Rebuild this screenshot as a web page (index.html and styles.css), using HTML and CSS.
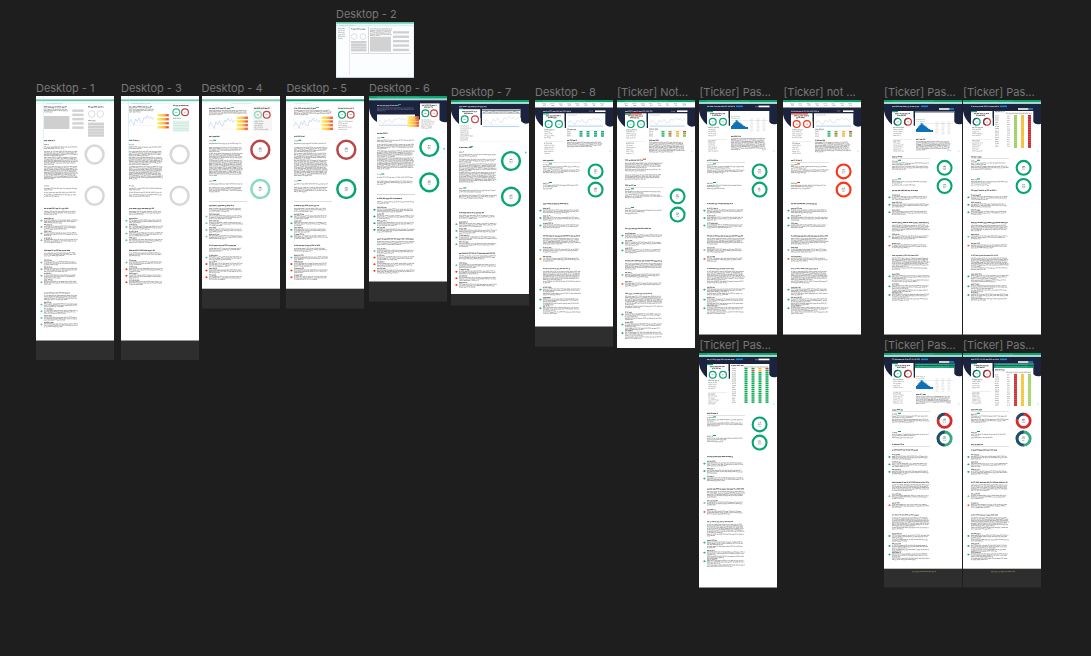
FILE: index.html
```html
<!DOCTYPE html>
<html lang="en">
<head>
<meta charset="utf-8">
<title>Canvas</title>
<link rel="stylesheet" href="styles.css">
</head>
<body>
<main class="canvas" id="canvas"></main>
<script src="canvas.js"></script>
</body>
</html>
```
FILE: styles.css
```css
body {
  margin: 0;
  background: #1e1e1e;
  font-family: Inter, "Liberation Sans", sans-serif;
}

.canvas {
  position: relative;
  width: 1091px;
  height: 656px;
  overflow: hidden;
}

/* Frames are placed freely on the canvas */
.frame {
  position: absolute;
  width: 78px;
}

.frame-label {
  position: absolute;
  left: 0;
  bottom: 100%;
  margin-bottom: 1px;
  font-size: 11px;
  line-height: 14px;
  letter-spacing: -0.03px;
  color: #777;
  white-space: nowrap;
}

.frame-art {
  display: block;
}
```
FILE: canvas.js
```js
const GREEN = '#08a573', MINT = '#86dabb', RED = '#b94747', ALERT = '#fa3419';
const NAVY = '#1b233f', GRAY = '#d8d8d8', BLUE = '#1488d8';
let seed = 7, out = '';
const rnd = () => (seed = (seed * 16807) % 2147483647) / 2147483647;
const add = s => { out += s; };

// Primitives, in frame units
function rect(x, y, w, h, fill) {
  add(`<rect x="${x}" y="${y}" width="${w}" height="${h}" fill="${fill}"/>`);
}
function path(d, stroke, sw, fill = 'none') {
  add(`<path d="${d}" stroke="${stroke}" stroke-width="${sw}" fill="${fill}"/>`);
}
function words(x, y, w, color, sw = 0.6) {
  let d = '', c = x;
  while (c < x + w - 0.5) {
    const n = Math.min(0.8 + rnd() * 3, x + w - c);
    d += `M${c.toFixed(1)} ${(y + (rnd() - 0.5) * 0.5).toFixed(2)}h${n.toFixed(1)}`;
    c += n + 0.25 + rnd() * 0.3;
  }
  path(d, color, sw);
}
function para(x, y, w, y2 = y, color = '#7c7c7c') {
  for (let r = y; r <= y2 + 0.1; r += 1.35) {
    const last = r + 1.35 > y2 + 0.1 && y2 > y;
    words(x, r, last ? w * (0.2 + rnd() * 0.5) : w * (0.93 + rnd() * 0.07), color);
  }
}
function head(x, y, w, color = '#4a4a4a') { words(x, y, w, color, 0.8); }
function ring(x, y, r, sw, color, part, frac = 0.25) {
  const m = r - sw / 2, len = 2 * Math.PI * m;
  add(`<circle cx="${x}" cy="${y}" r="${m}" fill="none" stroke="${color}" stroke-width="${sw}"/>`);
  if (part) add(`<circle cx="${x}" cy="${y}" r="${m}" fill="none" stroke="${part}" stroke-width="${sw}" stroke-dasharray="${len * frac} ${len}" transform="rotate(${-90 - 360 * frac} ${x} ${y})"/>`);
}
function score(x, y, r, sw, color, part, frac) {
  ring(x, y, r, sw, color, part, frac);
  words(x - 1.3, y - 1.4, 2.6, '#666', 0.8);
  words(x - 1.9, y + 0.2, 3.8, '#888');
  words(x - 1.5, y + 1.7, 3, '#999');
}
function small(x, y, color, part) {
  ring(x, y, 4, 1.2, color, part, 0.45);
  words(x - 1.2, y, 2.4, '#999', 0.7);
}
function items(x, ys, w, colors) {
  ys.forEach((y, i) => {
    const c = colors[i] || colors[colors.length - 1];
    rect(x - 3.2, y + 1.4, 1.3, 1.7, c);
    rect(x - 3.7, y + 1.9, 2.3, 0.7, c);
    words(x, y, 7 + rnd() * 4, '#555', 0.7);
    para(x, y + 1.6, w, y + 4.4);
  });
}
function spark(x, y, w, h, color = '#8fb0e8') {
  const v = [.8, .45, .7, .95, .4, .65, .3, .7, .75, .25, .4, .1, .35, .2, .45, .25];
  path('M' + v.map((k, i) => `${(x + w * i / 15).toFixed(1)} ${(y + h * k).toFixed(1)}`).join('L'), color, 0.4);
  path(`M${x} ${y}v${h}h${w}`, '#d9dfeb', 0.3);
}
function heatBars(x, y, step) {
  for (let i = 0; i < 4; i++) {
    rect(x, y + i * step, 11.5, 2.5, 'url(#heat)');
    words(x + 9, y + i * step + 1.2, 2, '#b84930');
  }
}
function list(x, y, y2, w = 10) {
  for (let r = y, i = 0; r <= y2; r += 2, i++) {
    words(x + 1, r, w * (0.55 + rnd() * 0.45), '#9a9a9a');
    rect(x, r - 0.4, 0.8, 0.8, i % 4 === 3 ? '#f08d7d' : '#8bd4b8');
  }
}

// Early grey and coloured wireframes
function wire(colored) {
  rect(0, 3.4, 78, 1.8, '#68cfae');
  rect(7.4, 0, 0.35, colored ? 65 : 55, '#aadcf2');
  rect(0, 7.3, 70, 0.3, '#bfe5f5');
  words(10, 7.6, colored ? 20 : 16, '#94cde8');
  head(8, 11, 22); rect(29, 10, 2, 0.8, '#49be94');
  para(8, 13.2, 25, 16.5);
  if (colored) {
    spark(8, 18.5, 25, 11); heatBars(36.3, 18, 4);
    head(52, 9.5, 16); small(55.3, 16.2, '#43bb91'); small(64, 16.2, RED);
    words(52, 22.5, 8, '#777');
    rect(52, 24.6, 16, 11, '#dff3eb');
    for (let i = 0; i < 4; i++) rect(52, 26.8 + i * 2.6, 16, 0.4, '#b8dfcf');
  } else {
    rect(8, 20, 25.4, 13, '#cfcfcf');
    for (let i = 0; i < 5; i++) rect(36.3, 13.4 + i * 4.25, 11.3, 2.5, '#d3d3d3');
    head(52, 11, 16); ring(55.6, 18, 3.8, 0.9, GRAY); ring(64.2, 18, 3.8, 0.9, GRAY);
    words(52, 24.6, 8, '#666');
    for (let i = 0; i < 5; i++) rect(52, 26.6 + i * 2.9, 16, 2.5, '#d0d0d0');
  }
  head(8, 44.5, 11);
  words(8, 48.5, 5, '#777'); para(8, 51, 34, 52.4); para(8, 55.5, 34, 59.6);
  para(8, 61.5, 34, 69); para(8, 70.7, 34, 84);
  ring(58.6, 58.5, 10.2, 2.5, GRAY); ring(58.6, 99.7, 10.2, 2.5, GRAY);
  words(8, 89.8, 5, '#777'); para(8, 92.4, 34, 93.8); para(8, 96.5, 34); para(8, 98.8, 34, 100.2);
  head(8, 112.5, 25); para(8, 115.5, 33, 118.2);
  items(8, [122.5, 128.7, 135.3, 142], 34, ['#63c6a2']);
  head(8, 154.4, 26); para(8, 157, 33, 159.8);
  items(8, [164.3, 171, 177.5, 184], 34, colored ? ['#63c6a2', ALERT] : ['#63c6a2']);
  if (!colored) {
    head(8, 197, 26, '#777'); para(8, 199.5, 34, 203.6);
    items(8, [206.3, 213, 219.7, 226.3], 34, ['#63c6a2']);
  }
}

// Second iteration with scores
function scored(dark) {
  const x = dark ? 8 : 7;
  rect(0, 3.3, 78, 2, dark ? GREEN : '#78d1b1');
  if (dark) rect(0, 5.3, 78, 0.8, '#c8ecdf');
  words(dark ? 8 : 29, 7.5, dark ? 17 : 21, '#9fd6ed', 0.5);
  if (!dark) rect(50.7, 10, 19.3, 25, '#f5f5f5');
  head(x, 12.3, 22); rect(x + 22, 11, 3, 0.9, '#35b78b');
  para(x, 14.5, 38, 18.6);
  spark(x, 21, 26, 12); heatBars(x + 27.4, 20.5, 3.7);
  head(52, 12.3, 16); small(56, 18.7, dark ? GREEN : MINT); small(64.7, 18.7, RED);
  list(52, 25.3, 34, 14);
  head(x, 40.4, 11); words(x, 44.8, 4, '#777'); rect(x + 4.2, 43.8, 3, 1, GREEN);
  para(x, 47.5, 34); para(x, 51.5, 34, 55.6); para(x, 57.5, 34, 63); para(x, 64.5, 34, 79.5);
  score(60.3 - (dark ? 0 : 2), 53.7, 10.2, 2.5, RED);
  words(x, 85, 4, '#777'); rect(x + 4.2, 84, 3, 1, GREEN);
  para(x, 88, 34); para(x, 91.6, 34, 95.6);
  score(60.3 - (dark ? 0 : 2), 93, 10.2, 2.5, dark ? GREEN : '#8adabd');
  rect(x, 105.2, 38, 0.4, '#aaa');
  head(x, 109.6, 25); para(x, 112.5, 33, 115.2);
  items(x, [118.3, 125, 131.6, 138.3], 34, [dark ? '#30b58a' : '#71cda9']);
  head(x, 149.4, 27); para(x, 152.4, 33, 155);
  items(x, [159.3, 165.8, 172.3, 179], 34, ['#63c6a2', ALERT]);
}

function hero(top, y) {
  rect(0, 0, 78, 2.1, GREEN);
  words(8, 1.1, 42, '#74c7aa', 0.4);
  if (top < 6) rect(0, 2.1, 78, top - 2.1, '#a7d6cb');
  else for (let i = 0; i < 8; i++) { words(7 + i * 8.3, 3.7, 4, '#aaa'); words(8 + i * 8.3, 5.3, 3, '#888'); }
  path(`M0 ${top}H78V${y}Q73 ${y + 2} 70 ${y - 2}V${top + 14}H31V${y + 2}H29.5V${top + 14}H8V${y + 1}Q1 ${y - 5} 0 ${top + 7}Z`, 'none', 0, NAVY);
}

function six() {
  rect(0, 0, 78, 2.8, GREEN); rect(0, 2.5, 78, 1.8, '#a7d6cb');
  words(8, 1.2, 42, '#74c7aa', 0.4);
  path('M0 4.3H78V26Q74 27 70 24H54L45.5 23H8V26Q1 22 0 12Z', 'none', 0, NAVY);
  words(8, 9.5, 22, '#c4c8d5', 0.8); rect(29, 8, 3, 1, GREEN);
  para(8, 12, 38, 15.5, '#737b92');
  rect(8, 18.5, 38, 12, '#fff'); spark(9, 21, 28, 7, '#b9c3d3'); heatBars(38.5, 20.3, 2.7);
  path('M10 29.3h29', '#92b5e0', 0.5);
  rect(51, 7.4, 19.5, 25, '#fff');
  head(53, 9.3, 15); head(55, 11, 9);
  small(56.4, 17.3, GREEN); small(65, 17.3, RED); list(52, 24, 32, 13);
  head(8, 37.3, 11); words(8, 42, 4, '#777'); rect(12.3, 41, 3, 1, GREEN);
  para(8, 44.3, 38, 45.8); para(8, 48.4, 38, 53); para(8, 55, 38, 60.5); para(8, 62, 38, 74);
  score(60.3, 51, 10.1, 2.4, GREEN); score(60.3, 86.4, 10.1, 2.4, GREEN);
  rect(74.3, 52, 1.6, 1.6, '#72b8e6');
  words(8, 78.5, 4, '#777'); rect(12.3, 77.5, 3, 1, GREEN);
  para(8, 81.3, 38); para(8, 85.3, 38, 88.2);
  rect(8, 98.2, 38, 0.4, '#999');
  head(8, 102.5, 25); para(8, 105.8, 38, 107.3);
  items(8, [111.5, 118.2, 125, 131.6], 38, [GREEN]);
  head(8, 143, 37); para(8, 145.7, 38, 148.5);
  items(8, [152.8, 159.3, 166, 172.6], 38, ['#63c6a2', ALERT]);
}

function seven() {
  hero(4, 23);
  words(8, 6.7, 28, '#c4c8d5', 0.8); rect(8, 8.2, 4, 1, GREEN);
  rect(8, 9.2, 21.3, 32, '#fff'); rect(31, 9, 38.5, 19, '#fff');
  rect(31, 9.6, 38.5, 1.1, '#444b60'); words(32, 12, 36, '#555'); path('M31 13.3h38.5', '#555', 0.4);
  spark(33, 15.5, 34, 9, '#b3c9dd'); path('M32 26.5h36', '#7eb7df', 0.6);
  head(11, 11.5, 15); head(13, 13.3, 9);
  small(13.7, 19.3, GREEN); small(24, 19.3, RED); list(9, 26, 40, 13);
  rect(8, 41.6, 62, 0.3, '#e6e6e6');
  head(8, 47.4, 13); rect(19, 46.2, 3, 1, GREEN);
  words(8, 52, 5, '#666'); para(8, 54.7, 38, 56.3); para(8, 59.5, 38, 62.2); para(8, 64, 38, 71); para(8, 72.5, 38, 83);
  score(60, 61, 10.1, 2.4, GREEN); score(60, 96.7, 10.1, 2.4, GREEN);
  rect(74, 51.7, 1.6, 1.6, '#72b8e6');
  words(8, 88.4, 4, '#777'); rect(12.3, 87.4, 3, 1, GREEN);
  para(8, 90.5, 38, 92); para(8, 95.4, 38, 98.5);
  head(8, 112.7, 25); para(8, 115.6, 38, 118.2);
  items(8, [122, 128.7, 135.3, 142], 38, ['#45b995']);
  head(8, 153.3, 37); para(8, 156, 38, 159);
  items(8, [163, 169.5, 176, 182.7], 38, ['#63c6a2', ALERT]);
}

function sections(dy) {
  head(8, 103.7 + dy, 26);
  items(8, [108.4, 115.8, 123.3].map(v => v + dy), 37, ['#26af83']);
  head(8, 136 + dy, 37); para(8, 138.6 + dy, 38, 144.6 + dy);
  items(8, [147.7 + dy], 37, ['#6fcaa9']); items(8, [156.7 + dy], 37, ['#ff5e43']);
  head(8, 168.7 + dy, 27, '#666'); para(8, 171.5 + dy, 38, 179.5 + dy); para(8, 181.3 + dy, 38, 183 + dy);
  [187.4, 197.4, 206].forEach(y => {
    items(8, [y + dy], 38, ['#26af83']); para(8, y + 6 + dy, 38, y + 7.6 + dy);
  });
}
function scores(y1, y2, c, split) {
  const n = '#1f4e6b';
  head(8, y1 - 11, 11); rect(8, y1 - 9.2, 38, 0.35, '#aaa');
  [y1, y2].forEach((y, i) => {
    const t = y - (i ? 6.2 : 6.6);
    words(8, t, 6, '#666'); rect(14, t - 1.4, 3, 1, split ? GREEN : c);
    para(8, t + 1.9, 37, t + 3.4); para(8, t + 5.2, 38, t + (i ? 6 : 9));
    score(60.6, y, 8, split ? 2.8 : 2.1, split ? (i ? '#3aa981' : '#d52b2b') : c, split && n, i ? 0.5 : 0.2);
  });
}
function grid(x, y, rows, step, cols, pick) {
  for (let r = 0; r < rows; r++) {
    words(x, y + r * step + 0.8, 4, '#888', 0.6);
    cols.forEach((cx, c) => rect(cx, y + r * step, 3, step * 0.72, pick(r, c)));
  }
}
const picks = (r, c) => ['#08a850', r === 1 ? '#e83b30' : '#08a850', r < 2 ? '#f3b51b' : '#08a850', r === 0 ? '#df3931' : '#08a850'][c];

// Ticker pages: o.kind selects what fills the main panel
function ticker(o) {
  const live = o.kind === 'live', top = live ? 7.5 : 4;
  const t = live ? 0 : o.split ? -3.3 : -2.3;
  hero(top, 26 + t);
  words(8, 11.3 + (live ? 0 : o.split ? -5 : -4.8), 28, '#c4c8d5', 0.8);
  if (live) { rect(60, 10.4, 10.5, 1.6, '#fff'); words(54, 11.2, 4, '#aaa'); }
  else {
    rect(37, 5.6, 7, 1.5, BLUE);
    if (o.blueBtn) { rect(55, 8.2, 10.5, 1.6, '#fff'); rect(66, 8.2, 4, 1.6, BLUE); }
    else { rect(59.5, 5.6, 11, 1.7, '#fff'); words(56, 6.5, 3, '#aaa'); }
  }
  const cy = 13.3 + t;
  rect(8, cy, 21.5, 42, '#fff'); rect(31, cy, 39.3, 38, '#fff');
  rect(8, cy, o.tag ? 17 : 6, 1.2, o.tag || GREEN);
  if (o.tag === ALERT && !o.c) rect(8, cy, 6, 1.2, GREEN);
  head(11, cy + 2.6, 15); head(13, cy + 4.4, 9);
  const c = o.c || GREEN;
  small(13.7, cy + 10.8, c, o.multi && '#29546c'); small(24, cy + 10.8, o.multi ? '#cf3a3a' : c, o.multi && '#7b3348');
  words(9, cy + 16.5, 11, '#777'); list(9, cy + 18.5, cy + 26, 10);
  rect(9, cy + 28, 19, 0.25, '#bbb'); words(9, cy + 30, 8, '#777'); list(9, cy + 32, cy + 41, 10);
  if (live) {
    words(33, 15, 10, '#bbb'); spark(33, 17, 35, 8, '#a8c6da'); path('M33 26.2h35', '#69a5d5', 0.5);
    words(32, 29.3, 9, '#555'); rect(31, 30.4, 38, 0.25, '#ccc');
    grid(32, 31, 3, 2.1, [44.5, 51.5, 59, 66], o.mixed ? (r, c) => ['#20b86b', r === 1 ? '#ed4c3d' : '#67bd4b', '#f4b92d', r ? '#76bd51' : '#e64a3b'][c] : () => '#13a96e');
    head(32, 40.3, 10); para(32, 42.4, 36, o.mixed ? 53 : 47.5);
  } else if (o.kind === 'peak') {
    const b = o.split ? 36 : o.blueBtn ? 32 : 29;
    if (o.blueBtn) rect(31, cy, 39.3, 1.6, '#70778a');
    words(32, b - 12.5, 9, '#aaa'); words(32, b - 10.5, 9, '#8ccbb4');
    rect(32, b - 8.5, 37, 0.25, '#bbb');
    path(`M32 ${b}v-3h1v-1.3h1.2v-1.4h1.2v-1.4h1.2v-1.7h2v1.2h1.2v1h1.5v1.2h1.5v1.1h1.5v1.2h1.8v1h3V${b}z`, 'none', 0, '#0f72b9');
    for (let i = 0; i < 9; i++) for (let k = 0; k < 3; k++) words(51.5 + k * 6, b - 10 + i * 1.5, 3, '#ccc', 0.5);
    head(32, b + 7.4 - (o.split ? 2 : 0), 10);
    para(32, b + 9.6 - (o.split ? 2 : 0), 35, 50.5); words(63, 50, 4, '#7cabea');
  } else if (o.kind === 'table') {
    head(32, cy + 1.5, 13); words(45, cy + 3, 24, '#888');
    grid(33, 14.8, 17, 2.1, [45.5, 52.5, 59.5, 66.5], picks);
  } else {
    const top2 = o.split ? 21 : 15, cols = o.split ? ['#cf3030', '#f5c638', '#a5d367'] : ['#9ccf5f', '#f5bd36', '#c8282e'];
    head(32, top2 - 4, 10); words(43, top2 - 1.5, 26, '#888');
    [51, 58, 65].forEach((x, i) => rect(x, top2, 3, o.split ? 32 : 33, cols[i]));
    grid(32, top2, 15, 2.15, [], picks);
    for (let i = 0; i < 15; i++) {
      words(44, top2 + 1 + i * 2.15, 3, '#999');
      [51, 58, 65].forEach(x => rect(x, top2 + 1.8 + i * 2.15, 3, 0.3, '#ffffff99'));
    }
    rect(31, top2 - 2.6, 38, 0.25, '#ccc');
  }
  if (o.split) { rect(31, 10.3, 39.3, 4.3, NAVY); rect(31, 10.8, 39.3, 1.7, GREEN); rect(31, 13, 39.3, 1.7, GREEN); words(33, 11.6, 32, '#7ed0b3', 0.4); words(33, 13.8, 32, '#7ed0b3', 0.4); }
  rect(74, 50.3, 1.5, 1.5, '#cfe6f6');
  if (o.extra) {
    head(8, 60.2, 18); rect(26, 58.7, 3, 1, ALERT); rect(8, 62, 38, 0.3, '#bbb');
    para(8, 63.5, 37, 67.5); para(8, 69.5, 37, 72); para(8, 75, 37, 79);
    scores(96.3, 114.6, GREEN);
  } else if (o.split) scores(67.8, 85.6, GREEN, true);
  else scores(71.4 + (o.blueBtn ? -3.6 : 0), 89.6 + (o.blueBtn ? -3.6 : 0), c);
  if (o.split) { head(8, 91.5, 12); rect(8, 93.3, 38, 0.35, '#aaa'); }
  sections(o.extra ? 24.9 : o.split ? -6.7 : o.blueBtn ? -13.3 : 0);
}

function overview() {
  rect(0, 0, 78, 55.5, '#fbfdff'); rect(0, 0, 78, 1.7, '#62c9a5');
  rect(0, 2.6, 78, 1.7, '#d9f0fa'); words(3, 3.4, 15, '#9ccce5');
  for (let i = 0; i < 6; i++) words(2, 6.6 + i * 2, 5 + rnd() * 3, '#999');
  rect(13.2, 5, 0.4, 48, '#c4c4c4'); rect(32.2, 5, 0.5, 26, '#aaa'); rect(15, 31, 60, 0.5, '#bbb');
  head(15, 7, 15, '#777'); ring(18.2, 14.5, 3.2, 0.6, '#ccc'); ring(27, 14.5, 3.2, 0.6, '#ccc');
  for (let i = 0; i < 4; i++) rect(15, 19 + i * 2.7, 15.5, 2.3, '#d0d0d0');
  para(34, 7, 22, 14, '#999'); rect(34, 14.8, 21, 14.8, '#d2d2d2');
  for (let i = 0; i < 5; i++) rect(57, 9.2 + i * 4.4, 16, 2.3, '#d0d0d0');
  path('M.2 0V55.3H77.8V0', '#bddcf0', 0.5);
}

// [label, x, y, page height, total height, painter]
const frames = [
  ['Desktop - 1', 36, 96, 244.5, 264, () => wire(false)],
  ['Desktop - 2', 336, 22, 55.5, 55.5, overview],
  ['Desktop - 3', 121, 96, 244.5, 264, () => wire(true)],
  ['Desktop - 4', 201.5, 96, 192.7, 212.5, () => scored(false)],
  ['Desktop - 5', 286.4, 96, 192.7, 212.5, () => scored(true)],
  ['Desktop - 6', 369, 96, 185.5, 205.7, six],
  ['Desktop - 7', 451, 100, 194, 205.5, seven],
  ['Desktop - 8', 535, 100, 226.5, 246.7, () => ticker({ kind: 'live' })],
  ['[Ticker] Not...', 617, 100, 248, 248, () => ticker({ kind: 'live', mixed: true, tag: ALERT, extra: true })],
  ['[Ticker] Pas...', 699.4, 100, 234.5, 234.5, () => ticker({ kind: 'peak' })],
  ['[Ticker] not ...', 783.4, 100, 234.5, 234.5, () => ticker({ kind: 'live', mixed: true, tag: ALERT, c: ALERT })],
  ['[Ticker] Pas...', 884, 100, 234.5, 234.5, () => ticker({ kind: 'peak', blueBtn: true, multi: true })],
  ['[Ticker] Pas...', 963, 100, 234.5, 234.5, () => ticker({ kind: 'columns', blueBtn: true, multi: true })],
  ['[Ticker] Pas...', 699.4, 353, 234.5, 234.5, () => ticker({ kind: 'table' })],
  ['[Ticker] Pas...', 884, 353, 215.7, 234.5, () => ticker({ kind: 'peak', blueBtn: true, multi: true, split: true })],
  ['[Ticker] Pas...', 963, 353, 215.7, 234.5, () => ticker({ kind: 'columns', blueBtn: true, multi: true, split: true })]
];

const defs = '<defs><linearGradient id="heat"><stop stop-color="#fff36a"/><stop offset=".5" stop-color="#ffc451"/><stop offset="1" stop-color="#f4623e"/></linearGradient></defs>';
document.getElementById('canvas').innerHTML = frames.map(([label, x, y, page, total, paint]) => {
  out = '';
  rect(0, 0, 78, total, '#2e2e2e');
  rect(0, 0, 78, page, '#fff');
  paint();
  if (y > 300 && total > page) words(28, 218.6, 24, '#777c49', 0.8);
  return `<section class="frame" style="left:${x}px;top:${y}px"><div class="frame-label">${label}</div><svg class="frame-art" width="78" height="${total}" viewBox="0 0 78 ${total}">${defs}${out}</svg></section>`;
}).join('');
```
